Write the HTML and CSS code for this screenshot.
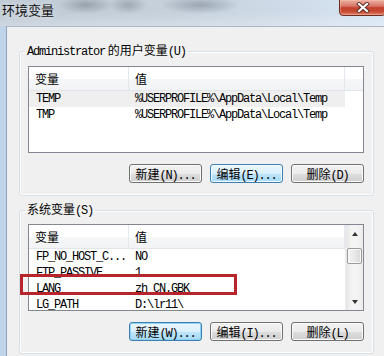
FILE: index.html
```html
<!DOCTYPE html>
<html lang="zh-CN">
<head>
    <meta charset="UTF-8">
    <meta name="viewport" content="width=device-width, initial-scale=1.0">
    <title>环境变量</title>
    <link rel="stylesheet" href="styles.css">
</head>
<body>
<div class="titlebar">
    <span class="title">环境变量</span>
    <div class="close">
        <svg width="14" height="11" viewBox="0 0 14 11">
            <path d="M3 2 L11 9 M11 2 L3 9" stroke="#5a2a24" stroke-width="4" stroke-linecap="square"/>
            <path d="M3 2 L11 9 M11 2 L3 9" stroke="#fff" stroke-width="2.2" stroke-linecap="square"/>
        </svg>
    </div>
</div>
<div class="frame">
    <div class="client">
        <fieldset class="group">
            <legend><span class="m">Administrator</span> 的用户变量<span class="m">(U)</span></legend>
            <div class="list">
                <div class="list-main">
                    <div class="head">
                        <div class="c1">变量</div>
                        <div class="c2">值</div>
                    </div>
                    <div class="row sel"><span class="c1 m">TEMP</span><span class="c2 m">%USERPROFILE%\AppData\Local\Temp</span></div>
                    <div class="row"><span class="c1 m">TMP</span><span class="c2 m">%USERPROFILE%\AppData\Local\Temp</span></div>
                </div>
                <div class="list-side">
                    <div class="head-fill"></div>
                </div>
            </div>
            <div class="buttons">
                <button class="btn">新建<span class="m">(N)...</span></button>
                <button class="btn blue">编辑<span class="m">(E)...</span></button>
                <button class="btn">删除<span class="m">(D)</span></button>
            </div>
        </fieldset>

        <fieldset class="group second">
            <legend>系统变量<span class="m">(S)</span></legend>
            <div class="list">
                <div class="list-main">
                    <div class="head">
                        <div class="c1">变量</div>
                        <div class="c2">值</div>
                    </div>
                    <div class="row"><span class="c1 m">FP_NO_HOST_C...</span><span class="c2 m">NO</span></div>
                    <div class="row"><span class="c1 m">FTP_PASSIVE</span><span class="c2 m">1</span></div>
                    <div class="row"><span class="c1 m">LANG</span><span class="c2 m">zh_CN.GBK</span></div>
                    <div class="row"><span class="c1 m">LG_PATH</span><span class="c2 m">D:\lr11\</span></div>
                </div>
                <div class="scrollbar">
                    <div class="arrow up"></div>
                    <div class="track">
                        <div class="thumb"></div>
                    </div>
                    <div class="arrow down"></div>
                </div>
            </div>
            <div class="buttons">
                <button class="btn blue focus">新建<span class="m">(W)...</span></button>
                <button class="btn">编辑<span class="m">(I)...</span></button>
                <button class="btn">删除<span class="m">(L)</span></button>
            </div>
        </fieldset>
    </div>
</div>
<div class="mark"></div>
</body>
</html>
```

FILE: styles.css
```css
* {
    box-sizing: border-box;
}
body {
    margin: 0;
    width: 384px;
    height: 356px;
    overflow: hidden;
    position: relative;
    background: #f0f0f0;
    font-family: "Noto Sans CJK SC", sans-serif;
    font-size: 12px;
    color: #000;
}
.m {
    font-family: "Liberation Mono", "Noto Sans CJK SC", monospace;
    font-size: 12px;
    letter-spacing: -1.2px;
}

/* title bar */
.titlebar {
    height: 26px;
    display: flex;
    background:
        radial-gradient(ellipse 28px 9px at 86px 5px, rgba(70, 80, 92, .35), transparent),
        radial-gradient(ellipse 20px 9px at 128px 5px, rgba(70, 80, 92, .3), transparent),
        radial-gradient(ellipse 40px 9px at 200px 5px, rgba(70, 80, 92, .35), transparent),
        linear-gradient(to bottom, rgba(255, 255, 255, 0) 50%, rgba(255, 255, 255, .25) 100%),
        linear-gradient(to right, #bfcad5 0%, #c6d1dc 45%, #cfdbe8 75%, #d8e5f2 100%);
}
.title {
    padding-left: 2px;
    font-size: 13px;
    line-height: 20px;
    color: #111;
    text-shadow: 0 0 6px rgba(255, 255, 255, .8);
}
.close {
    margin-left: auto;
    margin-top: -1px;
    margin-right: -2px;
    width: 47px;
    height: 17px;
    border: 1px solid #6e2b22;
    border-radius: 0 0 4px 4px;
    background: linear-gradient(#eab0a0 0%, #d9796a 40%, #c2412d 52%, #c84c35 78%, #e3876e 100%);
    box-shadow: inset 0 0 0 1px rgba(255, 200, 180, .4);
    display: flex;
    align-items: center;
    justify-content: center;
}

/* window frame and client */
.frame {
    height: 330px;
    border-left: 6px solid #bfd3e9;
}
.client {
    height: 100%;
    border-left: 1px solid #8fa5bc;
    border-top: 1px solid #a9b8c8;
    padding: 16px 0 0 12px;
}

/* group boxes */
.group {
    width: 355px;
    margin: 0;
    padding: 0 8px 12px 8px;
    border: 1px solid #d5dfe5;
    border-radius: 3px;
    box-shadow: inset 0 0 0 1px #fff;
}
.group legend {
    padding: 0 2px;
    margin-left: -3px;
    line-height: 14px;
    font-size: 12px;
}
.group.second {
    margin-top: 6px;
}

/* list views */
.list {
    margin-top: 7px;
    width: 336px;
    height: 87px;
    border: 1px solid #828790;
    background: #fff;
    display: flex;
    overflow: hidden;
}
.second .list {
    margin-top: 6px;
}
.list-main {
    width: 316px;
}
.head {
    display: flex;
    height: 24px;
    border-bottom: 1px solid #e2e5ea;
    background: linear-gradient(#ffffff 0%, #ffffff 50%, #f6f7f9 51%, #f2f3f5 100%);
}
.head .c1,
.head .c2 {
    line-height: 23px;
    border-right: 1px solid #e3e8ee;
}
.c1 {
    width: 100px;
    padding-left: 6px;
}
.c2 {
    width: 216px;
    padding-left: 6px;
}
.row {
    display: flex;
    height: 16px;
    line-height: 16px;
    white-space: nowrap;
}
.row .c1 {
    padding-left: 7px;
}
.row.sel {
    background: #efefef;
}
.list-side {
    flex: 1;
}
.head-fill {
    height: 24px;
    border-bottom: 1px solid #e2e5ea;
    background: linear-gradient(#ffffff 0%, #ffffff 50%, #f6f7f9 51%, #f2f3f5 100%);
}

/* scrollbar */
.scrollbar {
    flex: 1;
    display: flex;
    flex-direction: column;
    background: linear-gradient(to right, #e6e6e6, #f3f3f3 30%, #f3f3f3 70%, #ececec);
    border-left: 1px solid #ececec;
}
.arrow {
    height: 17px;
    display: flex;
    align-items: center;
    justify-content: center;
}
.arrow::after {
    content: "";
    border-left: 3px solid transparent;
    border-right: 3px solid transparent;
}
.arrow.up::after {
    border-bottom: 4px solid #333;
}
.arrow.down::after {
    border-top: 4px solid #333;
}
.track {
    flex: 1;
    padding-top: 6px;
}
.thumb {
    margin: 0 1px;
    height: 16px;
    border: 1px solid #9a9a9a;
    border-radius: 2px;
    background: linear-gradient(to right, #f4f4f4, #e8e8e8 50%, #d8d8d8);
    box-shadow: inset 0 0 0 1px #fafafa;
}

/* buttons */
.buttons {
    width: 336px;
    margin-top: 11px;
    display: flex;
    justify-content: flex-end;
    gap: 8px;
}
.btn {
    width: 73px;
    height: 19px;
    padding: 0;
    border: 1px solid #707070;
    border-radius: 3px;
    background: linear-gradient(#f2f2f2 0%, #ebebeb 50%, #dddddd 51%, #cfcfcf 100%);
    box-shadow: inset 0 0 0 1px #fbfbfb;
    font-family: "Noto Sans CJK SC", sans-serif;
    font-size: 12px;
    line-height: 17px;
    color: #000;
    white-space: nowrap;
}
.btn.blue {
    border-color: #3c7fb1;
    background: linear-gradient(#eaf6fd 0%, #d9f0fc 50%, #bee6fd 51%, #a7d9f5 100%);
    box-shadow: inset 0 0 0 1px #f4fbff;
}
.btn.focus {
    box-shadow: inset 0 0 0 1px #8fd2f2;
}

/* annotation */
.mark {
    position: absolute;
    left: 20px;
    top: 274px;
    width: 217px;
    height: 21px;
    border: 3px solid #b8242b;
}
```
